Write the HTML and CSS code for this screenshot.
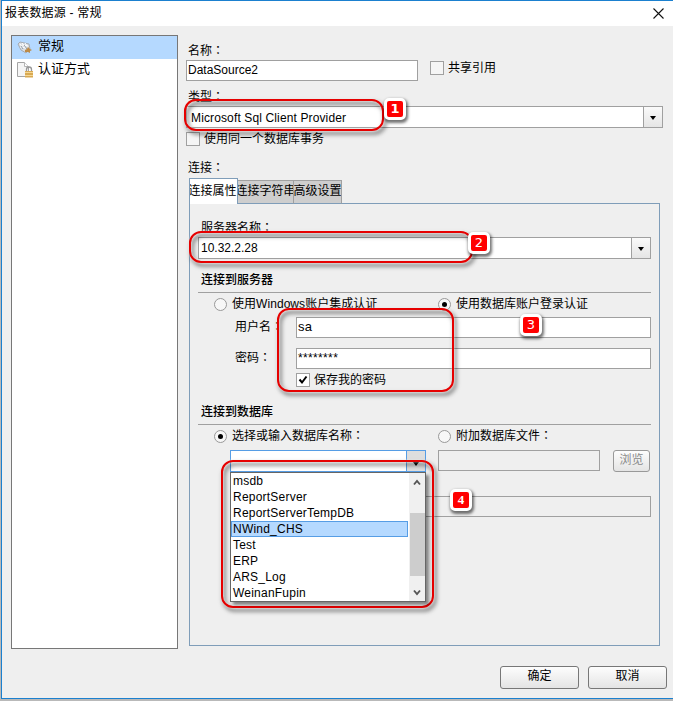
FILE: index.html
```html
<!DOCTYPE html>
<html lang="zh-CN">
<head>
<meta charset="utf-8">
<title>报表数据源 - 常规</title>
<link rel="stylesheet" href="styles.css">
</head>
<body>
<div class="window">
  <header class="titlebar">
    <span class="title">报表数据源 - 常规</span>
    <svg class="close" width="11" height="11" viewBox="0 0 11 11"><path d="M.5.5l10 10M10.500.5l-10 10" stroke="#111" stroke-width="1.1" fill="none"/></svg>
  </header>
  <div class="body">
    <nav class="sidebar">
      <div class="nav-item active">
        <svg width="16" height="16" viewBox="0 0 16 16">
          <path d="M1 5l2-2 9 2 1 5-4 4-5-3z" fill="#d9dde2" stroke="#a5abb3"/>
          <path d="M3 5l3 4M5 4l4 5M8 4l2 3M3 8l6 1M5 6l6 1" stroke="#fff"/>
          <path d="M4 7l2 3M7 6l3 4" stroke="#8f98a3"/>
          <path d="M8 13v-2l2-1 1-2 2 2 2 1-2 1v2l-2-1z" fill="#bd8b48"/>
        </svg>
        <span>常规</span>
      </div>
      <div class="nav-item">
        <svg width="16" height="16" viewBox="0 0 16 16">
          <path d="M.5.500h7l4 4v10H.5z" fill="#f5f5f5" stroke="#a4a4a4"/>
          <path d="M7.500.5v4h4" fill="#fff" stroke="#b5b5b5"/>
          <path d="M9.500 9V7.500a2.500 2.500 0 015 0V9" fill="none" stroke="#989898" stroke-width="1.300"/>
          <path d="M8 9h8v6.500H8z" fill="#d8a952"/><path d="M8 10h8v1H8zM8 13h8v1H8z" fill="#f5d794"/>
        </svg>
        <span>认证方式</span>
      </div>
    </nav>
    <main class="main">
      <div class="label name-label">名称<i lang="zh-TW">：</i></div>
      <div class="row name-row">
        <div class="input name-input">DataSource2</div>
        <span class="check"></span><span class="check-text">共享引用</span>
      </div>
      <div class="label type-label">类型<i lang="zh-TW">：</i></div>
      <div class="combo type-combo"><span class="value">Microsoft Sql Client Provider</span><span class="drop"></span></div>
      <div class="row trans-row"><span class="check"></span><span class="check-text">使用同一个数据库事务</span></div>
      <div class="label conn-label">连接<i lang="zh-TW">：</i></div>
      <div class="tabs">
        <div class="tab current"><span>连接属性</span></div>
        <div class="tab second"><span>连接字符串</span></div>
        <div class="tab third"><span>高级设置</span></div>
      </div>
      <section class="panel">
        <div class="label server-label">服务器名称<i lang="zh-TW">：</i></div>
        <div class="combo server-combo"><span class="value">10.32.2.28</span><span class="drop"></span></div>
        <h2>连接到服务器</h2>
        <div class="options">
          <div class="option"><span class="radio"></span><span class="latin">使用Windows账户集成认证</span></div>
          <div class="option"><span class="radio on"></span><span>使用数据库账户登录认证</span></div>
        </div>
        <div class="field"><label>用户名<i lang="zh-TW">：</i></label><div class="input user">sa</div></div>
        <div class="field"><label>密码<i lang="zh-TW">：</i></label><div class="input secret">********</div></div>
        <div class="row save-row">
          <span class="check"><svg width="12" height="12" viewBox="0 0 12 12"><path d="M2.500 5.500l2.500 3 4.500-6" fill="none" stroke="#000" stroke-width="2"/></svg></span>
          <span class="check-text">保存我的密码</span>
        </div>
        <h2 class="db-title">连接到数据库</h2>
        <div class="options">
          <div class="option"><span class="radio on"></span><span>选择或输入数据库名称<i lang="zh-TW">：</i></span></div>
          <div class="option"><span class="radio"></span><span>附加数据库文件<i lang="zh-TW">：</i></span></div>
        </div>
        <div class="db-row">
          <div class="combo db-combo"><span class="value"></span><span class="drop"></span>
            <div class="popup">
              <ul>
                <li>msdb</li><li>ReportServer</li><li>ReportServerTempDB</li><li class="picked">NWind_CHS</li><li>Test</li><li>ERP</li><li>ARS_Log</li><li>WeinanFupin</li>
              </ul>
              <div class="scroll">
                <svg width="8" height="7" viewBox="0 0 8 7"><path d="M1 5.500l3-3.500 3 3.500" fill="none" stroke="#555" stroke-width="1.900"/></svg>
                <div class="thumb"></div>
                <svg width="8" height="7" viewBox="0 0 8 7"><path d="M1 1.500L4 5l3-3.500" fill="none" stroke="#555" stroke-width="1.900"/></svg>
              </div>
            </div>
          </div>
          <div class="input disabled file"></div>
          <div class="button browse">浏览</div>
        </div>
        <div class="input disabled logical"></div>
      </section>
    </main>
  </div>
  <footer class="footer"><div class="button">确定</div><div class="button">取消</div></footer>
</div>
<div class="mark mark-type"></div><div class="badge badge-1">1</div>
<div class="mark mark-server"></div><div class="badge badge-2">2</div>
<div class="mark mark-login"></div><div class="badge badge-3">3</div>
<div class="mark mark-db"></div><div class="badge badge-4">4</div>
</body>
</html>
```

FILE: styles.css
```css
* { box-sizing: border-box; }
body {
  margin: 0;
  width: 673px;
  height: 701px;
  overflow: hidden;
  position: relative;
  background: #b9b9b9;
  color: #000;
  font: 12px/16px "Liberation Sans", "Noto Sans CJK SC", sans-serif;
  white-space: nowrap;
}
i { font-style: normal; font-family: "Noto Sans CJK TC", sans-serif; line-height: 1; }
.window {
  margin-left: 1px;
  height: 699px;
  display: flex;
  flex-direction: column;
  background: #efefef;
  border: 1px solid #1b80cf;
  border-right: 0;
}
.titlebar {
  height: 25px;
  flex: none;
  display: flex;
  align-items: center;
  justify-content: space-between;
  padding: 0 9px 0 3px;
  background: #fff;
}
.title { letter-spacing: .2px; position: relative; top: -1px; }
.body { display: flex; height: 620px; }
.sidebar {
  width: 167px;
  height: 614px;
  margin: 9px 0 0 9px;
  border: 1px solid #777;
  background: #fff;
  font-size: 13px;
}
.nav-item { display: flex; height: 23px; align-items: center; gap: 5px; padding-left: 5px; }
.nav-item svg, .nav-item span { position: relative; top: -1px; }
.nav-item span { top: -2px; }
.active { background: #b5d9ff; }
.main { width: 478px; margin-left: 8px; }
.label { padding-left: 2px; height: 16px; }
.name-label { margin-top: 17px; }
.row { display: flex; align-items: center; }
.name-row { margin-top: 1px; height: 21px; }
.input { height: 21px; background: #fff; border: 1px solid #a0a0a0; padding-left: 2px; line-height: 18px; }
.name-input { width: 232px; margin-right: 12px; padding-left: 1px; }
.check { width: 14px; height: 14px; border: 1px solid #a0a0a0; background: #f5f5f5; margin-right: 4px; flex: none; }
.name-row .check { position: relative; top: -3px; }
.name-row .check-text { position: relative; top: -3px; }
.check svg { display: block; }
.type-label { margin-top: 8px; }
.combo { display: flex; height: 22px; background: #fff; border: 1px solid #a0a0a0; }
.value { flex: 1; padding-left: 2px; line-height: 20px; }
.drop {
  width: 19px;
  border-left: 1px solid #a0a0a0;
  background: linear-gradient(#fafafa, #e5e5e5);
  display: flex;
  align-items: center;
  justify-content: center;
}
.drop::before { content: ""; border: 3.5px solid transparent; border-top: 4px solid #000; border-bottom: 0; margin-top: 2px; }
.type-combo { width: 477px; margin-top: 1px; }
.type-combo .value { padding-left: 4px; letter-spacing: .13px; padding-top: 1px; }
.trans-row { height: 14px; margin-top: 4px; }
.conn-label { margin-top: 14px; }
.tabs { display: flex; align-items: flex-end; height: 26px; margin: 2px 0 -1px 3px; position: relative; }
.tab { height: 24px; border: 1px solid #a0a0a0; border-left: 0; border-bottom-color: #7f9db9; background: #cecece; overflow: hidden; display: flex; justify-content: center; align-items: center; }
.tab span { flex: none; position: relative; top: -1px; }
.second { width: 56px; }
.third { width: 48px; }
.tab.current { width: 49px; height: 26px; background: #fff; border: 1px solid #7f9db9; border-bottom: 0; }
.current span { left: -1px; }
.panel { width: 471px; height: 443px; margin-left: 3px; border: 1px solid #7f9db9; padding: 16px 8px 0; }
.server-label { padding-left: 3px; height: 17px; }
h2 { font-size: 12px; font-weight: 500; line-height: 16px; margin: 13px 0 0; padding: 0 0 4px 3px; border-bottom: 1px solid #a0a0a0; }
.options { display: grid; grid-template-columns: 224px 1fr; height: 24px; padding-left: 16px; }
.option { display: flex; align-items: center; gap: 6px; }
.option > span:last-child { position: relative; top: -1px; left: -1px; }
.radio { width: 13px; height: 13px; border: 1px solid #999; border-radius: 50%; background: #f7f7f7; flex: none; display: flex; align-items: center; justify-content: center; position: relative; top: -1px; }
.radio.on::before { content: ""; width: 5px; height: 5px; border-radius: 50%; background: #000; }
.latin { letter-spacing: .05px; }
.field { display: grid; grid-template-columns: 98px 355px; height: 31px; }
.field label { padding-left: 37px; line-height: 20px; }
.user { font-size: 13px; letter-spacing: .2px; padding-left: 1px; }
.secret { letter-spacing: .35px; padding-left: 1px; }
.save-row { height: 14px; margin: -6px 0 0 98px; }
.save-row .check { background: #fff; }
.db-title { margin-top: 17px; }
.db-row { display: flex; margin: 1px 0 0 32px; height: 22px; }
.db-combo { width: 196px; border-color: #569de5; position: relative; margin-right: 12px; }
.db-combo .drop { border-color: #569de5; background: #dedede; padding-top: 4px; }
.popup {
  position: absolute;
  left: -1px;
  top: 21px;
  width: 196px;
  height: 130px;
  border: 1px solid #666;
  background: #fff;
  display: flex;
  box-shadow: 3px 3px 3px rgba(0, 0, 0, .45);
  z-index: 1;
}
.popup ul { list-style: none; margin: 0 1px 0 0; padding: 1px 0 0; width: 177px; letter-spacing: .22px; }
.popup li { height: 16px; line-height: 16px; padding-left: 2px; }
.popup .picked { background: #b5d9ff; border: 1px solid #569de5; line-height: 14px; padding-left: 1px; }
.popup ul { position: relative; top: -1px; }
.scroll { width: 16px; background: #f0f0f0; display: flex; flex-direction: column; align-items: center; padding: 6px 0 5px; }
.thumb { width: 15px; height: 63px; margin: 27px 0 13px; background: #cdcdcd; }
.scroll svg { flex: none; }
.disabled { background: #efefef; }
.file { width: 162px; margin-right: 13px; }
.logical { margin: 24px 0 0 32px; }
.button { display: flex; align-items: center; justify-content: center; border: 1px solid #777; border-radius: 3px; background: linear-gradient(#fdfdfd, #e4e4e4); width: 79px; height: 23px; padding-bottom: 3px; }
.browse { width: 37px; height: 22px; color: #8a8a8a; border-color: #999; }
.footer { display: flex; gap: 9px; margin: 20px 0 0 498px; }
.mark { position: absolute; border: 2px solid #e60000; border-radius: 12px; filter: drop-shadow(0 0 1px rgba(255, 255, 255, .7)) drop-shadow(2px 3px 2px rgba(0, 0, 0, .6)); }
.mark-type { left: 184px; top: 99px; width: 200px; height: 32px; }
.mark-server { left: 189px; top: 231px; width: 284px; height: 32px; }
.mark-login { left: 277px; top: 308px; width: 177px; height: 84px; }
.mark-db { left: 221px; top: 460px; width: 213px; height: 148px; }
.badge { position: absolute; width: 22px; height: 22px; border: 3px solid #fff; border-radius: 5px; background: #f00; color: #fff; font: bold 13px/16px "DejaVu Sans", sans-serif; text-align: center; box-shadow: 1px 2px 3px 1px rgba(0, 0, 0, .55); }
.badge-1 { left: 384px; top: 98px; }
.badge-2 { left: 468px; top: 232px; font-weight: normal; }
.badge-3 { left: 520px; top: 314px; font-weight: normal; }
.badge-4 { left: 450px; top: 489px; font-family: "Liberation Serif", serif; }
```
